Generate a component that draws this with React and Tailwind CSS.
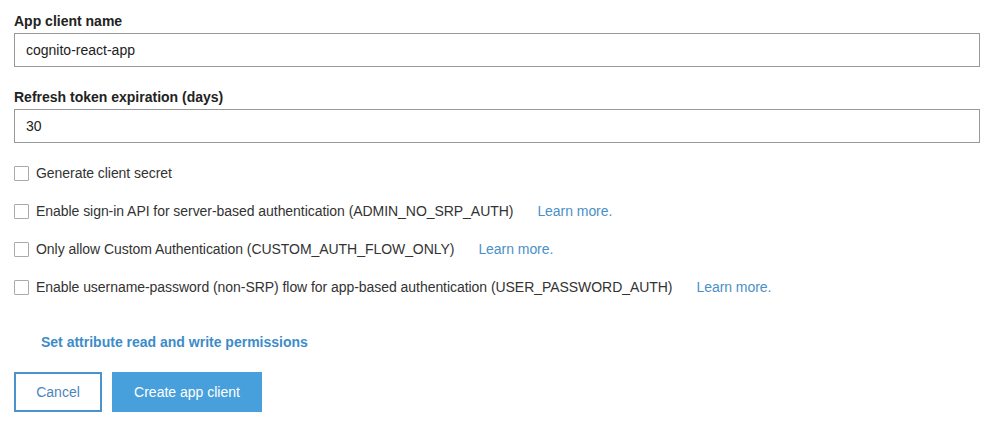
export default function App() {
  const options = [
    { label: "Generate client secret" },
    { label: "Enable sign-in API for server-based authentication (ADMIN_NO_SRP_AUTH)", link: true },
    { label: "Only allow Custom Authentication (CUSTOM_AUTH_FLOW_ONLY)", link: true },
    { label: "Enable username-password (non-SRP) flow for app-based authentication (USER_PASSWORD_AUTH)", link: true },
  ];

  return (
    <div className="w-[1000px] h-[434px] bg-white pl-[14px] pt-[13px] font-['Liberation_Sans',Arial,sans-serif] text-[14px] text-[#222]">
      <div className="w-[966px] flex flex-col">
        <label className="font-bold leading-4 mb-1">App client name</label>
        <input
          defaultValue="cognito-react-app"
          className="h-[34px] border border-[#999] px-[11px] text-[14px] text-[#222] outline-none"
        />

        <label className="font-bold leading-4 mt-[22px] mb-1">Refresh token expiration (days)</label>
        <input
          defaultValue="30"
          className="h-[34px] border border-[#999] px-[11px] text-[14px] text-[#222] outline-none"
        />

        {/* Options */}
        <div className="flex flex-col gap-[22px] mt-[22px]">
          {options.map((o) => (
            <div key={o.label} className="flex items-center h-4 leading-4 tracking-[-0.05px]">
              <span className="w-[15px] h-[15px] border border-[#aaa] bg-white rounded-[1px] mr-[7px] shrink-0" />
              <span className="text-[#333]">{o.label}</span>
              {o.link && (
                <a href="#" className="ml-[24px] text-[#4a90c8]">
                  Learn more.
                </a>
              )}
            </div>
          ))}
        </div>

        <a href="#" className="ml-[27px] mt-[39px] font-bold leading-4 text-[#3d8cc9]">
          Set attribute read and write permissions
        </a>

        <div className="flex gap-[10px] mt-[22px]">
          <button className="w-[88px] h-[40px] border-2 border-[#4b93cd] bg-white text-[#4a86bd] text-[14px]">
            Cancel
          </button>
          <button className="w-[150px] h-[40px] bg-[#479fdb] text-white text-[14px]">
            Create app client
          </button>
        </div>
      </div>
    </div>
  );
}
